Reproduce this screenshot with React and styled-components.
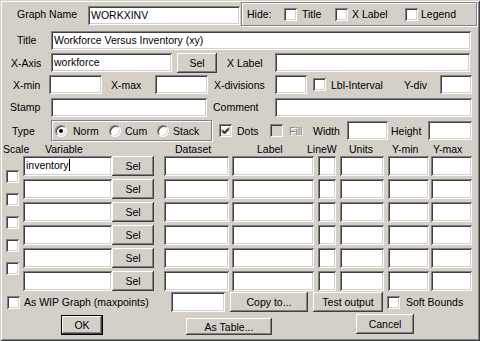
import React from 'react';
import styled, { createGlobalStyle, css } from 'styled-components';

const GlobalStyle = createGlobalStyle`
    html, body {
        margin: 0;
        padding: 0;
        background: #d4d0c8;
    }
    body {
        font-family: "Liberation Sans", Arial, sans-serif;
        font-size: 10.5px;
        color: #000;
    }
`;

const sunken = css`
    box-shadow: inset 1px 1px #808080, inset -1px -1px #fff, inset 2px 2px #404040, inset -2px -2px #d4d0c8;
`;

const raised = css`
    box-shadow: inset -1px -1px #404040, inset 1px 1px #fff, inset -2px -2px #808080, inset 2px 2px #d4d0c8;
`;

const Dialog = styled.div`
    width: 480px;
    height: 341px;
    box-sizing: border-box;
    background: #d4d0c8;
    box-shadow: inset 1px 1px #d4d0c8, inset -1px -1px #404040, inset 2px 2px #fff, inset -2px -2px #808080;
    overflow: hidden;
`;

const Row = styled.div`
    display: flex;
    align-items: ${({ $align }) => $align || 'center'};
    margin-top: ${({ $mt }) => $mt || 0}px;
    height: ${({ $h }) => $h}px;
`;

const Label = styled.div`
    flex: none;
    width: ${({ $w }) => $w ? `${$w}px` : 'auto'};
    margin-left: ${({ $ml }) => $ml || 0}px;
    white-space: nowrap;
    line-height: 12px;
    color: ${({ $disabled }) => $disabled ? '#808080' : '#000'};
    text-shadow: ${({ $disabled }) => $disabled ? '1px 1px #fff' : 'none'};
`;

const Input = styled.div`
    flex: none;
    box-sizing: border-box;
    width: ${({ $w }) => $w}px;
    height: ${({ $h }) => $h || 19}px;
    margin-left: ${({ $ml }) => $ml || 0}px;
    margin-top: ${({ $mt }) => $mt || 0}px;
    background: #fff;
    ${sunken};
    padding: 3px 3px 0;
    line-height: 13px;
    white-space: nowrap;
    overflow: hidden;
`;

const Caret = styled.span`
    display: inline-block;
    width: 1px;
    height: 12px;
    background: #000;
    vertical-align: -2px;
`;

const Button = styled.div`
    flex: none;
    box-sizing: border-box;
    width: ${({ $w }) => $w}px;
    height: ${({ $h }) => $h || 20}px;
    margin-left: ${({ $ml }) => $ml || 0}px;
    margin-top: ${({ $mt }) => $mt || 0}px;
    display: flex;
    align-items: center;
    justify-content: center;
    background: #d4d0c8;
    white-space: nowrap;
    ${raised};
    ${({ $default }) => $default && css`
        border: 1px solid #000;
        box-shadow: inset -1px -1px #404040, inset 1px 1px #fff, inset -2px -2px #808080;
    `}
`;

const CheckBox = styled.div`
    flex: none;
    box-sizing: border-box;
    width: 13px;
    height: 13px;
    margin-left: ${({ $ml }) => $ml || 0}px;
    background: ${({ $disabled }) => $disabled ? '#d4d0c8' : '#fff'};
    ${sunken};
    display: flex;
    align-items: center;
    justify-content: center;
`;

const Radio = styled.div`
    flex: none;
    box-sizing: border-box;
    width: 12px;
    height: 12px;
    margin-left: ${({ $ml }) => $ml || 0}px;
    border-radius: 50%;
    background: #fff;
    border: 1px solid;
    border-color: #808080 #fff #fff #808080;
    box-shadow: inset 1px 1px #404040, inset -1px -1px #d4d0c8;
    display: flex;
    align-items: center;
    justify-content: center;

    &::after {
        content: '';
        display: ${({ $on }) => $on ? 'block' : 'none'};
        width: 4px;
        height: 4px;
        border-radius: 50%;
        background: #000;
    }
`;

const GroupBox = styled.div`
    flex: none;
    box-sizing: border-box;
    display: flex;
    align-items: center;
    width: ${({ $w }) => $w}px;
    height: ${({ $h }) => $h}px;
    margin-left: ${({ $ml }) => $ml || 0}px;
    border: 1px solid #808080;
    box-shadow: inset 1px 1px #fff, 1px 1px #fff;
`;

const Grid = styled.div`
    display: flex;
    margin-top: 0;
`;

const ScaleColumn = styled.div`
    width: 23px;
    box-sizing: border-box;
    padding: 14px 0 0 6px;
    display: flex;
    flex-direction: column;
    gap: 10px;
`;

const VarRows = styled.div`
    display: flex;
    flex-direction: column;
    gap: 3px;
`;

const Tick = () => (
    <svg width="9" height="9" viewBox="0 0 9 9">
        <path d="M1 3.5 L3.5 6 L8 1.5 M1 4.5 L3.5 7 L8 2.5 M1 5.5 L3.5 8 L8 3.5" stroke="#000" strokeWidth="1" fill="none" />
    </svg>
);

const VariableRow = ({ value }) => (
    <Row $h={20}>
        <Input $w={89} $h={20}>{value}{value && <Caret />}</Input>
        <Button $w={42}>Sel</Button>
        <Input $w={65} $ml={10} $h={20} />
        <Input $w={82} $ml={3} $h={20} />
        <Input $w={18} $ml={4} $h={20} />
        <Input $w={44} $ml={4} $h={20} />
        <Input $w={41} $ml={4} $h={20} />
        <Input $w={41} $ml={2} $h={20} />
    </Row>
);

export default function App() {
    const rows = ['inventory', '', '', '', '', ''];
    return (
        <>
            <GlobalStyle />
            <Dialog>
                <Row $mt={2} $h={24}>
                    <Label $ml={17} $w={71}>Graph Name</Label>
                    <Input $w={152} $mt={3}>WORKXINV</Input>
                    <GroupBox $ml={1} $w={236} $h={24}>
                        <Label $ml={5} $w={37}>Hide:</Label>
                        <CheckBox />
                        <Label $ml={5} $w={33}>Title</Label>
                        <CheckBox />
                        <Label $ml={4} $w={53}>X Label</Label>
                        <CheckBox />
                        <Label $ml={3}>Legend</Label>
                    </GroupBox>
                </Row>

                <Row $mt={4} $h={20}>
                    <Label $ml={17} $w={34}>Title</Label>
                    <Input $w={420}>Workforce Versus Inventory (xy)</Input>
                </Row>

                <Row $mt={2} $h={21}>
                    <Label $ml={11} $w={40}>X-Axis</Label>
                    <Input $w={121}>workforce</Input>
                    <Button $ml={5} $w={40}>Sel</Button>
                    <Label $ml={10} $w={48}>X Label</Label>
                    <Input $w={195} />
                </Row>

                <Row $mt={1} $h={21}>
                    <Label $ml={13} $w={36}>X-min</Label>
                    <Input $w={53} />
                    <Label $ml={9} $w={44}>X-max</Label>
                    <Input $w={53} />
                    <Label $ml={6} $w={61}>X-divisions</Label>
                    <Input $w={32} />
                    <CheckBox $ml={6} />
                    <Label $ml={5} $w={73}>Lbl-Interval</Label>
                    <Label $w={36}>Y-div</Label>
                    <Input $w={32} />
                </Row>

                <Row $mt={2} $h={20}>
                    <Label $ml={10} $w={41}>Stamp</Label>
                    <Input $w={156} />
                    <Label $ml={6} $w={62}>Comment</Label>
                    <Input $w={197} />
                </Row>

                <Row $mt={3} $h={21}>
                    <Label $ml={12} $w={39}>Type</Label>
                    <GroupBox $w={161} $h={21}>
                        <Radio $ml={3} $on />
                        <Label $ml={6} $w={36}>Norm</Label>
                        <Radio />
                        <Label $ml={4} $w={32}>Cum</Label>
                        <Radio />
                        <Label $ml={4}>Stack</Label>
                    </GroupBox>
                    <CheckBox $ml={7}><Tick /></CheckBox>
                    <Label $ml={5} $w={33}>Dots</Label>
                    <CheckBox $disabled />
                    <Label $ml={6} $w={24} $disabled>Fill</Label>
                    <Label $w={34}>Width</Label>
                    <Input $w={41} />
                    <Label $ml={3} $w={37}>Height</Label>
                    <Input $w={44} />
                </Row>

                <Row $mt={1} $h={14}>
                    <Label $ml={3} $w={42}>Scale</Label>
                    <Label $w={130}>Variable</Label>
                    <Label $w={82}>Dataset</Label>
                    <Label $w={50}>Label</Label>
                    <Label $w={42}>LineW</Label>
                    <Label $w={43}>Units</Label>
                    <Label $w={41}>Y-min</Label>
                    <Label>Y-max</Label>
                </Row>

                <Grid>
                    <ScaleColumn>
                        <CheckBox />
                        <CheckBox />
                        <CheckBox />
                        <CheckBox />
                        <CheckBox />
                    </ScaleColumn>
                    <VarRows>
                        {rows.map((v, i) => <VariableRow key={i} value={v} />)}
                    </VarRows>
                </Grid>

                <Row $mt={1} $h={20}>
                    <CheckBox $ml={7} />
                    <Label $ml={4} $w={147}>As WIP Graph (maxpoints)</Label>
                    <Input $w={54} $h={20} />
                    <Button $ml={5} $w={78}>Copy to...</Button>
                    <Button $ml={5} $w={70}>Test output</Button>
                    <CheckBox $ml={4} />
                    <Label $ml={6}>Soft Bounds</Label>
                </Row>

                <Row $mt={2} $h={22} $align="flex-start">
                    <Button $ml={61} $w={42} $mt={1} $default>OK</Button>
                    <Button $ml={83} $w={86} $mt={4} $h={17}>As Table...</Button>
                    <Button $ml={84} $w={58}>Cancel</Button>
                </Row>
            </Dialog>
        </>
    );
}
